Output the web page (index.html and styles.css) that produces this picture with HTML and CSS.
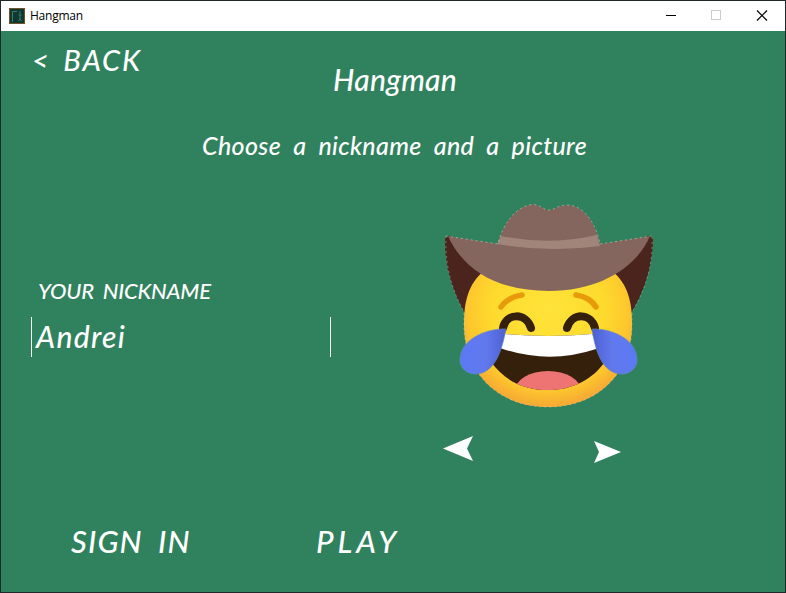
FILE: index.html
```html
<!DOCTYPE html>
<html lang="en">
<head>
<meta charset="utf-8">
<title>Hangman</title>
<link rel="stylesheet" href="styles.css">
</head>
<body>
<div class="window">
  <header class="titlebar">
    <svg class="app-icon" width="16" height="16" viewBox="0 0 16 16">
      <rect x=".5" y=".5" width="15" height="15" fill="#0d3a30" stroke="#75512b"/>
      <path d="M3.500 14V3.500H8M11 3v3M9.500 7h3M11 7v4M9.500 13l1.500-2 1.500 2" fill="none" stroke="#55897a" stroke-width=".8"/>
    </svg>
    <span class="app-name">Hangman</span>
    <div class="controls">
      <svg width="46" height="29" viewBox="0 0 46 29"><path d="M19 14.500h10" stroke="#000"/></svg>
      <svg width="46" height="29" viewBox="0 0 46 29"><rect x="18.500" y="9.500" width="9" height="9" fill="none" stroke="#ccc"/></svg>
      <svg width="46" height="29" viewBox="0 0 46 29"><path d="M18 9.500l10 10m0-10l-10 10" stroke="#000" stroke-width="1.200"/></svg>
    </div>
  </header>
  <main class="board">
    <div class="top">
      <a class="back">&lt; BACK</a>
      <h1 class="title">Hangman</h1>
    </div>
    <p class="subtitle">Choose a nickname and a picture</p>
    <div class="choices">
      <div class="form">
        <div class="label">YOUR NICKNAME</div>
        <div class="field">Andrei</div>
      </div>
      <div class="picker">
        <svg class="avatar" width="220" height="212" viewBox="440 200 220 212">
          <defs>
            <radialGradient id="face" cx="548" cy="310" r="100" gradientUnits="userSpaceOnUse">
              <stop offset="0" stop-color="#ffe33a"/><stop offset=".55" stop-color="#fedb2d"/><stop offset=".8" stop-color="#fdc72d"/><stop offset="1" stop-color="#f5a336"/>
            </radialGradient>
            <linearGradient id="tearL" x1="0" x2="1"><stop offset="0" stop-color="#5b79f4"/><stop offset=".55" stop-color="#6279ee"/><stop offset="1" stop-color="#4b60d2"/></linearGradient>
            <linearGradient id="tearR" x1="1" x2="0"><stop offset="0" stop-color="#5b79f4"/><stop offset=".55" stop-color="#6279ee"/><stop offset="1" stop-color="#4b60d2"/></linearGradient>
            <clipPath id="mouth"><path d="M505 334Q548 338 592 334L606 360C593 380 572 390 548 390S505 381 491 362Z"/></clipPath>
          </defs>
          <path d="M445 239Q446 235 451 236L500 268 475 316 464 312Q444 276 445 239ZM653 239Q652 235 647 236L598 268 622 316 632 312Q653 276 653 239Z" fill="#4b241d"/>
          <path d="M484 271C468 284 464 302 464 324C464 375 500 407 548 407S632 375 632 324C632 302 628 284 612 271Z" fill="url(#face)"/>
          <path d="M446 236Q444 276 464 312V325C464 375 500 407 548 407S632 375 632 324V312Q654 276 652 236" fill="none" stroke="#d8ded3" stroke-width=".7" stroke-dasharray="2 3" opacity=".6"/>
          <path d="M501 307Q508 297 522 295M576 295Q590 297 596 307" fill="none" stroke="#e99a0b" stroke-width="5.500" stroke-linecap="round"/>
          <g clip-path="url(#mouth)">
            <path d="M485 325h130v70H485z" fill="#35200b"/>
            <path d="M500 330h97l-1 19Q548 365 500 348Z" fill="#fff"/>
            <ellipse cx="548" cy="391" rx="33" ry="20" fill="#ee7474"/>
          </g>
          <path d="M503 328C506 313 526 312 531 328M567 328C572 312 591 313 595 328" fill="none" stroke="#35200b" stroke-width="8" stroke-linecap="round"/>
          <path d="M506 329C487 328 460 339 460 360C460 368 467 374 475 374C495 374 502 350 506 329Z" fill="url(#tearL)" stroke="#628ac2" stroke-width=".6"/>
          <path d="M592 329C611 328 637 339 637 360C637 368 630 374 622 374C602 374 595 350 592 329Z" fill="url(#tearR)" stroke="#628ac2" stroke-width=".6"/>
          <path d="M448 236L498 244C501 229 513 207 532 204.500C540 204 543 210 549 210S557 205 568 205C586 206 597 227 600 244L650 236C637 267 600 291 549 291S464 271 448 236Z" fill="#84665e"/>
          <path d="M501 236Q549 246 597 235L600 246Q549 253 497 244Z" fill="#a1857b"/>
          <path d="M446 236L498 244C501 229 513 207 532 204.500C540 204 543 210 549 210S557 205 568 205C586 206 597 227 600 244L652 236" fill="none" stroke="#d8ded3" stroke-width=".7" stroke-dasharray="2 3" opacity=".7"/>
        </svg>
        <div class="arrows">
          <svg width="30" height="26" viewBox="0 0 30 26"><path d="M0 12.500L30 0 24 12.500 30 25Z" fill="#fff"/></svg>
          <svg class="next" width="27" height="22" viewBox="0 0 27 22"><path d="M27 11L0 0 5 11 0 22Z" fill="#fff"/></svg>
        </div>
      </div>
    </div>
    <footer class="actions">
      <a class="signin">SIGN IN</a>
      <a class="play">PLAY</a>
    </footer>
  </main>
</div>
</body>
</html>
```
FILE: styles.css
```css
* { box-sizing: border-box; }
body { margin: 0; overflow: hidden; }
svg { display: block; }
.window {
  width: 786px; height: 593px;
  border: 1px solid #22272a;
  display: flex; flex-direction: column;
  background: #2f825d;
}
.titlebar {
  height: 30px; flex: none;
  display: flex; align-items: center;
  padding-left: 8px;
  background: #fff; color: #000;
  font: 12px/30px "Open Sans", "Noto Sans", sans-serif;
}
.app-name { margin-left: 5px; letter-spacing: -.25px; }
.controls { display: flex; margin-left: auto; align-self: flex-start; }
.board {
  flex: 1;
  display: flex; flex-direction: column;
  color: #fff;
  font-family: Lato, "Open Sans", sans-serif;
  font-style: italic; font-weight: 500;
  white-space: nowrap;
}
.top { display: flex; height: 78px; }
.back { width: 332px; padding: 11px 0 0 31px; font-size: 29px; line-height: 36px; letter-spacing: 1.900px; word-spacing: 4px; }
.title { margin: 30px 0 0; font-size: 30px; line-height: 36px; font-weight: 500; letter-spacing: .3px; }
.subtitle { margin: 21px 0 0 201px; font-size: 25px; line-height: 30px; letter-spacing: .35px; word-spacing: 6px; }
.choices { display: flex; margin-top: 40px; }
.form { width: 439px; padding: 77px 0 0 30px; }
.label { padding-left: 7px; font-size: 22px; line-height: 28px; letter-spacing: -.2px; word-spacing: 4px; }
.field {
  width: 300px; height: 40px; margin-top: 12px; padding-left: 4px;
  border: solid #fff; border-width: 0 1px;
  font-size: 30px; line-height: 38px; letter-spacing: 1.300px;
}
.arrows { display: flex; justify-content: space-between; width: 178px; margin: 24px 0 0 3px; }
.next { margin-top: 5px; }
.actions { display: flex; margin-top: 58px; font-size: 31px; line-height: 40px; }
.signin { width: 315px; padding-left: 70px; letter-spacing: 1.100px; word-spacing: 7px; }
.play { letter-spacing: 4px; }
```
